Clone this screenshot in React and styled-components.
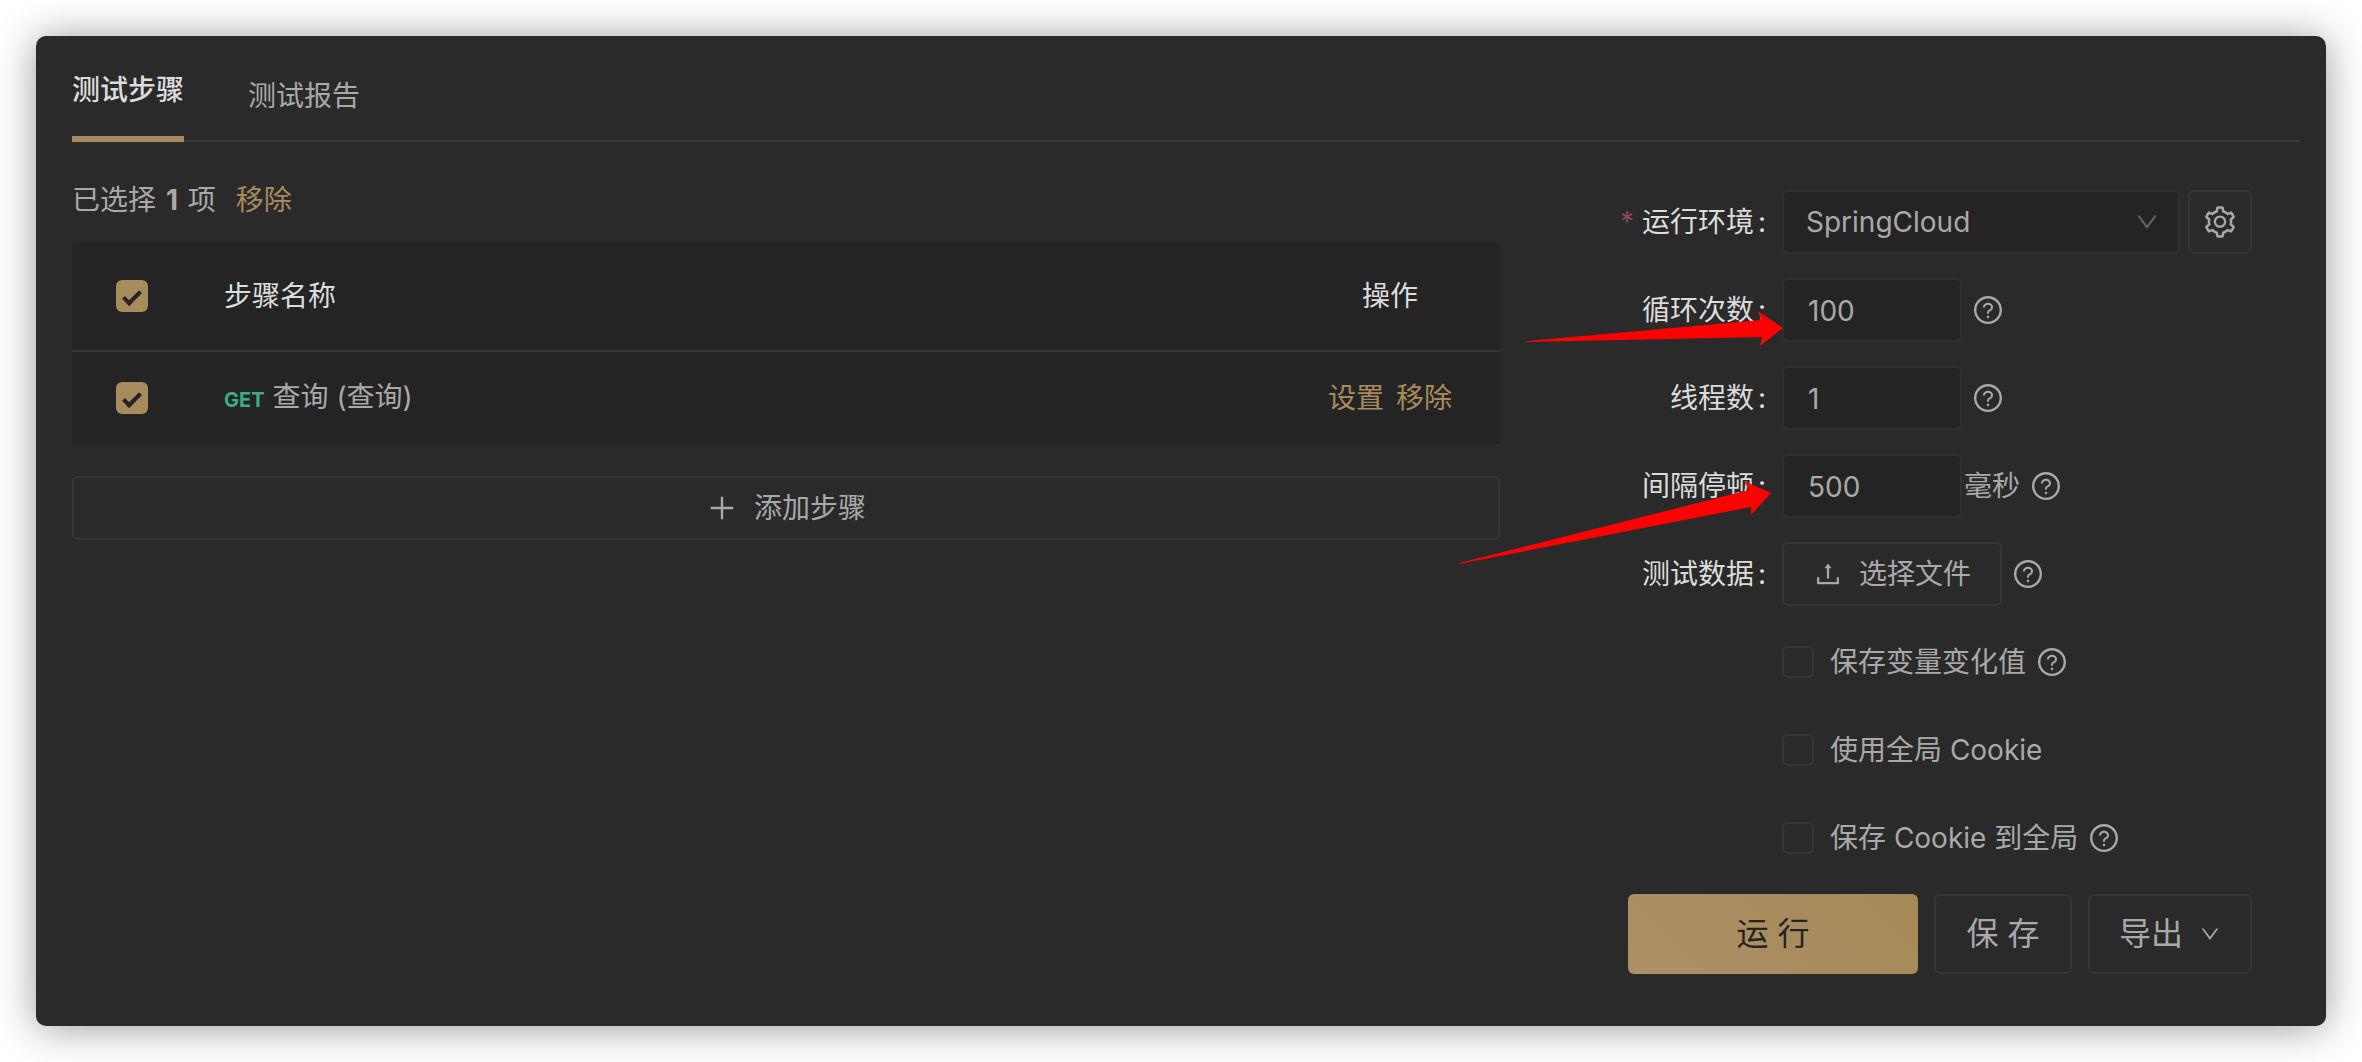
import React, { useState } from 'react';
import styled, { createGlobalStyle } from 'styled-components';
import {
  AiOutlineDown,
  AiOutlinePlus,
  AiOutlineQuestionCircle,
  AiOutlineSetting,
  AiOutlineUpload,
} from 'react-icons/ai';

const GlobalStyle = createGlobalStyle`
  *, *::before, *::after {
    box-sizing: border-box;
  }

  body {
    margin: 0;
    background: #fff;
    color: #a9a9a9;
    font-family: Inter, 'Noto Sans CJK SC', sans-serif;
    font-size: 28px;
    line-height: 44px;
  }

  button, input, select {
    margin: 0;
    color: inherit;
    font: inherit;
  }
`;

const Page = styled.div`
  padding: 36px;
`;

const Card = styled.main`
  padding: 0 26px 52px 36px;
  border-radius: 10px;
  background: #2a2a2a;
  box-shadow: 0 2px 40px rgba(0, 0, 0, 0.4);
`;

// Tabs
const TabList = styled.div`
  display: flex;
  align-items: flex-end;
  gap: 64px;
  height: 106px;
  border-bottom: 2px solid #3a3a3a;
`;

const Tab = styled.button`
  margin-bottom: -2px;
  padding: 0 0 24px;
  border: 0;
  border-bottom: ${(p) => (p.$active ? '6px solid #a88b5c' : '0')};
  background: none;
  color: ${(p) => (p.$active ? '#dcdcdc' : '#a9a9a9')};
  font-weight: ${(p) => (p.$active ? 500 : 400)};
  line-height: 44px;
  cursor: pointer;
`;

const Columns = styled.div`
  display: grid;
  grid-template-columns: minmax(0, 2fr) minmax(0, 1fr);
  gap: 38px;
  padding: 34px 48px 0 0;
`;

// Steps
const Summary = styled.div`
  display: flex;
  gap: 20px;
  padding-top: 2px;
  margin-bottom: 20px;

  b {
    margin: 0 2px;
  }
`;

const Link = styled.a`
  color: #a88b5c;
  text-decoration: none;
`;

const StepTable = styled.table`
  width: 100%;
  border-collapse: separate;
  border-spacing: 0;
  border-radius: 8px 8px 0 0;
  background: #242424;
  table-layout: fixed;
`;

const HeadCell = styled.th`
  width: ${(p) => p.$width || 'auto'};
  height: 110px;
  padding: 0 ${(p) => (p.$first ? 44 : 0)}px;
  border-bottom: 2px solid #363636;
  color: #dcdcdc;
  font-weight: 400;
  text-align: ${(p) => p.$align || 'left'};
`;

const Cell = styled.td`
  height: 92px;
  padding: 0 ${(p) => (p.$first ? 44 : 0)}px;
  text-align: ${(p) => p.$align || 'left'};
`;

const Method = styled.span`
  margin-right: 8px;
  color: #3dac80;
  font-size: 20px;
  font-weight: 700;
`;

const CellLinks = styled.div`
  display: flex;
  justify-content: center;
  gap: 12px;
`;

const Checkbox = styled.input`
  display: grid;
  flex: none;
  place-items: center;
  width: 32px;
  height: 32px;
  appearance: none;
  border: 2px solid #363636;
  border-radius: 6px;
  cursor: pointer;

  &:checked {
    border-color: #a88b5c;
    background: #a88b5c;
  }

  &:checked::after {
    width: 10px;
    height: 18px;
    border: solid #242424;
    border-width: 0 4px 4px 0;
    content: '';
    transform: rotate(45deg);
  }
`;

const Button = styled.button`
  display: flex;
  align-items: center;
  justify-content: center;
  gap: 16px;
  width: ${(p) => p.$width || 'auto'};
  height: ${(p) => (p.$large ? 80 : 64)}px;
  padding: 0;
  border: 2px solid #363636;
  border-radius: 6px;
  background: none;
  font-size: ${(p) => (p.$large ? 32 : 28)}px;
  cursor: pointer;
`;

const AddButton = styled(Button)`
  margin-top: 32px;
`;

const RunButton = styled(Button)`
  border: 0;
  background: linear-gradient(45deg, #ad9066, #a58957);
  color: #242424;
`;

// Settings form
const Form = styled.form`
  position: relative;
  display: flex;
  flex-direction: column;
  gap: 24px;
  padding-top: 14px;
`;

const Row = styled.div`
  display: flex;
  align-items: center;
  height: 64px;
`;

const Label = styled.label`
  flex: 1;
  padding-right: 16px;
  color: #dcdcdc;
  text-align: right;
  white-space: nowrap;

  &::after {
    margin-left: 4px;
    content: ':';
  }
`;

const Required = styled.span`
  margin-right: 8px;
  color: #8c4658;
`;

const Control = styled.div`
  display: flex;
  flex: 0 0 470px;
  align-items: center;
  gap: 10px;
  margin-left: auto;
`;

const NumberInput = styled.input`
  width: 180px;
  height: 64px;
  padding: 2px 22px 0 24px;
  border: 2px solid #303030;
  border-radius: 6px;
  background: #242424;
`;

const Unit = styled.span`
  margin-left: -8px;
`;

const SelectBox = styled.div`
  display: grid;
  flex: 1;
  align-items: center;
  margin-right: -2px;

  > * {
    grid-area: 1 / 1;
  }

  > svg {
    justify-self: end;
    margin-right: 20px;
    color: #646464;
    pointer-events: none;
  }
`;

const Select = styled.select`
  width: 100%;
  height: 64px;
  padding: 0 22px;
  appearance: none;
  border: 2px solid #303030;
  border-radius: 6px;
  background: #242424;
`;

const CheckLabel = styled.label`
  display: flex;
  align-items: center;
  gap: 16px;
`;

const Actions = styled.div`
  display: flex;
  justify-content: flex-end;
  gap: 16px;
`;

const Arrow = styled.svg`
  position: absolute;
  top: ${(p) => p.$top}px;
  right: ${(p) => p.$right}px;
  fill: #ff0000;
  pointer-events: none;
`;

const Help = () => <AiOutlineQuestionCircle size={32} />;

const steps = [{ id: 1, method: 'GET', name: '查询 (查询)' }];

const options = [
  { key: 'vars', text: '保存变量变化值', help: true },
  { key: 'useCookie', text: '使用全局 Cookie', help: false },
  { key: 'saveCookie', text: '保存 Cookie 到全局', help: true },
];

const Steps = () => {
  const [selected, setSelected] = useState([1]);
  const allSelected = selected.length === steps.length;

  const toggle = (id) => {
    setSelected(selected.includes(id) ? selected.filter((s) => s !== id) : [...selected, id]);
  };

  return (
    <section>
      <Summary>
        <span>
          已选择 <b>{selected.length}</b> 项
        </span>
        <Link href="#remove">移除</Link>
      </Summary>
      <StepTable>
        <thead>
          <tr>
            <HeadCell $width="152px" $first>
              <Checkbox
                type="checkbox"
                aria-label="全选"
                checked={allSelected}
                onChange={() => setSelected(allSelected ? [] : steps.map((s) => s.id))}
              />
            </HeadCell>
            <HeadCell>步骤名称</HeadCell>
            <HeadCell $width="220px" $align="center">
              操作
            </HeadCell>
          </tr>
        </thead>
        <tbody>
          {steps.map((step) => (
            <tr key={step.id}>
              <Cell $first>
                <Checkbox
                  type="checkbox"
                  aria-label={step.name}
                  checked={selected.includes(step.id)}
                  onChange={() => toggle(step.id)}
                />
              </Cell>
              <Cell>
                <Method>{step.method}</Method>
                {step.name}
              </Cell>
              <Cell>
                <CellLinks>
                  <Link href="#edit">设置</Link>
                  <Link href="#remove">移除</Link>
                </CellLinks>
              </Cell>
            </tr>
          ))}
        </tbody>
      </StepTable>
      <AddButton type="button" $width="100%">
        <AiOutlinePlus size={32} />
        添加步骤
      </AddButton>
    </section>
  );
};

const Settings = () => (
  <Form onSubmit={(e) => e.preventDefault()}>
    <Row>
      <Label htmlFor="env">
        <Required>*</Required>
        运行环境
      </Label>
      <Control>
        <SelectBox>
          <Select id="env" defaultValue="SpringCloud">
            <option>SpringCloud</option>
          </Select>
          <AiOutlineDown size={26} />
        </SelectBox>
        <Button type="button" $width="64px" aria-label="环境设置">
          <AiOutlineSetting size={36} />
        </Button>
      </Control>
    </Row>
    <Row>
      <Label htmlFor="loops">循环次数</Label>
      <Control>
        <NumberInput id="loops" defaultValue="100" />
        <Help />
      </Control>
    </Row>
    <Row>
      <Label htmlFor="threads">线程数</Label>
      <Control>
        <NumberInput id="threads" defaultValue="1" />
        <Help />
      </Control>
    </Row>
    <Row>
      <Label htmlFor="delay">间隔停顿</Label>
      <Control>
        <NumberInput id="delay" defaultValue="500" />
        <Unit>毫秒</Unit>
        <Help />
      </Control>
    </Row>
    <Row>
      <Label htmlFor="file">测试数据</Label>
      <Control>
        <Button id="file" type="button" $width="220px">
          <AiOutlineUpload size={30} />
          选择文件
        </Button>
        <Help />
      </Control>
    </Row>
    {options.map((option) => (
      <Row key={option.key}>
        <Control>
          <CheckLabel>
            <Checkbox type="checkbox" />
            {option.text}
          </CheckLabel>
          {option.help && <Help />}
        </Control>
      </Row>
    ))}
    <Actions>
      <RunButton type="submit" $large $width="290px">
        运 行
      </RunButton>
      <Button type="button" $large $width="138px">
        保 存
      </Button>
      <Button type="button" $large $width="164px">
        导出
        <AiOutlineDown size={22} />
      </Button>
    </Actions>
    <Arrow width="256" height="36" $top={135} $right={469}>
      <path d="M0 30 L234 9 L231 0 L256 17 L233 35 L235 26 L0 31 Z" />
    </Arrow>
    <Arrow width="312" height="84" $top={305} $right={481}>
      <path d="M0 82 L290 9 L285 0 L312 12 L292 34 L292 26 L0 83 Z" />
    </Arrow>
  </Form>
);

const App = () => (
  <Page>
    <GlobalStyle />
    <Card>
      <TabList role="tablist">
        <Tab role="tab" aria-selected="true" $active>
          测试步骤
        </Tab>
        <Tab role="tab" aria-selected="false">
          测试报告
        </Tab>
      </TabList>
      <Columns>
        <Steps />
        <Settings />
      </Columns>
    </Card>
  </Page>
);

export default App;
